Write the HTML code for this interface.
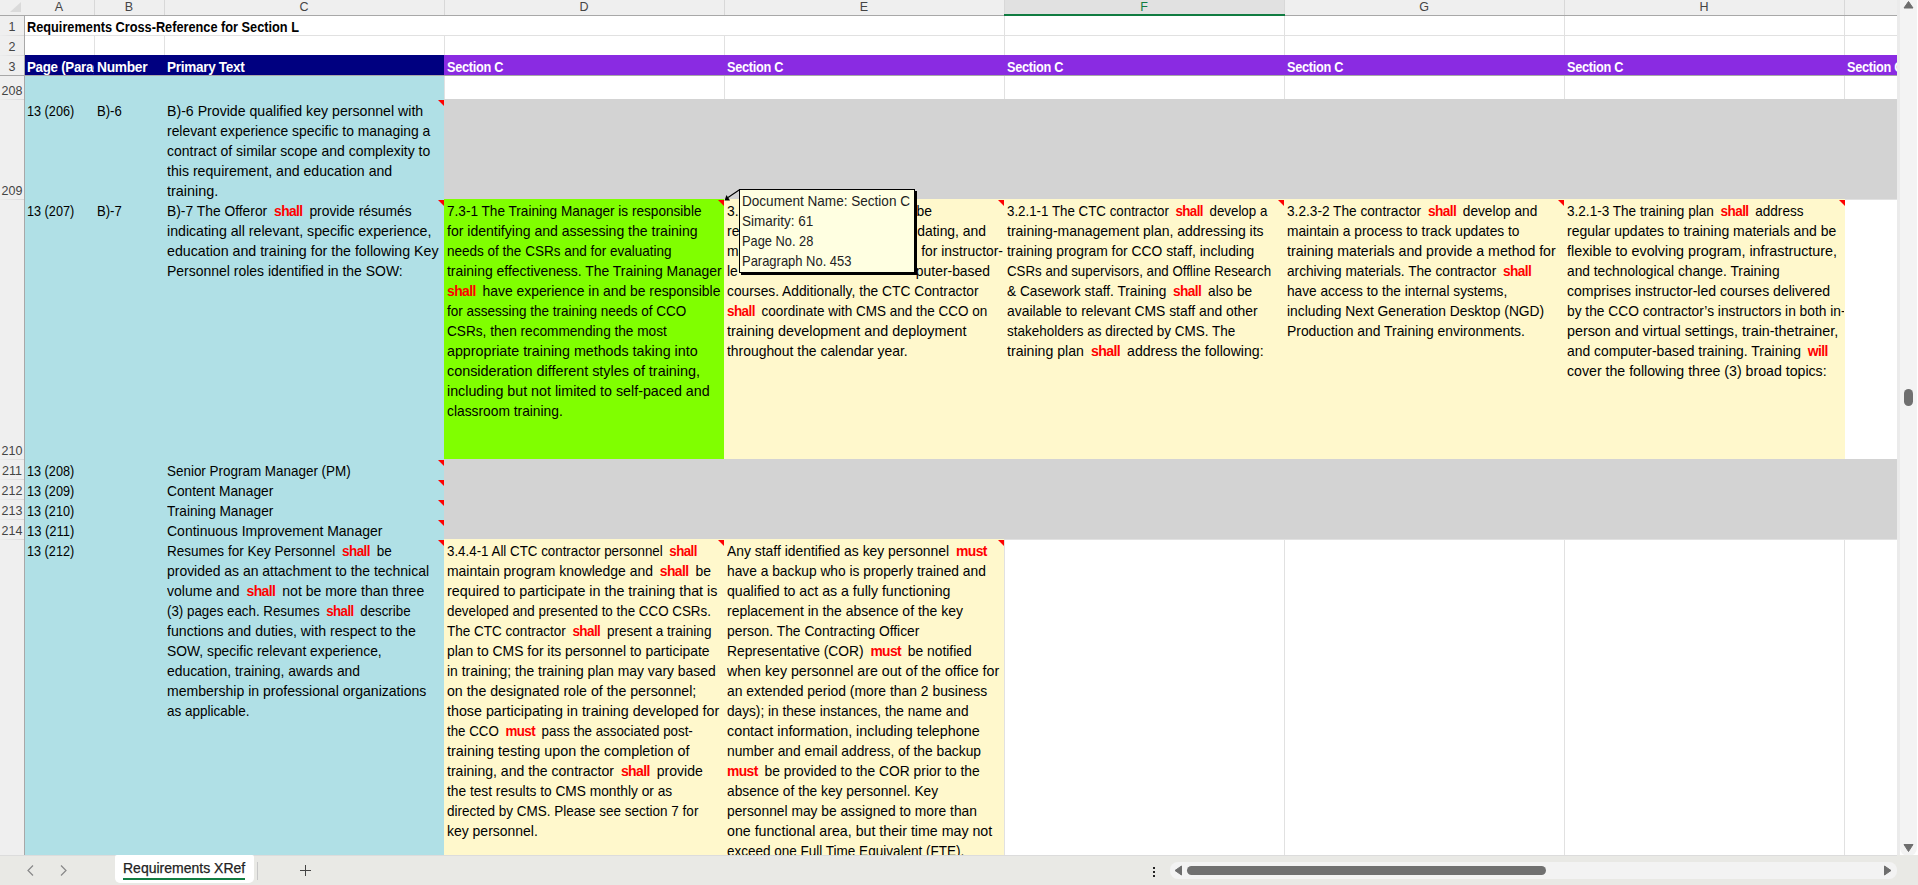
<!DOCTYPE html>
<html><head><meta charset="utf-8"><title>Requirements XRef</title><style>
*{margin:0;padding:0;box-sizing:border-box}
html,body{width:1918px;height:885px;overflow:hidden;background:#fff;font-family:"Liberation Sans",sans-serif}
body>div,#g>div{position:absolute}
#g{position:absolute;left:0;top:0;width:1897px;height:855px;overflow:hidden;background:#fff}
#g>div{position:absolute}
.t{font-size:13.9px;line-height:20px;color:#000;white-space:nowrap}
.r{color:#ff0000;font-weight:bold;padding:0 3px 0 3px}
.r0{padding-left:0}
.tb{font-weight:bold}
.tt{color:#222}
.ln{position:absolute;left:0;white-space:nowrap;transform-origin:0 0}
.r{letter-spacing:-0.6px}
.hb{font-size:13.9px;line-height:20px;color:#fff;font-weight:bold;white-space:nowrap;letter-spacing:-0.3px}
.ch{font-size:12.5px;line-height:15px;color:#444;text-align:center}
.rh{font-size:12.5px;line-height:15px;color:#444;text-align:center;width:24px}
.tri{width:0;height:0;border-top:6px solid #f00;border-left:6px solid transparent}
</style></head><body>
<div id="g">
<div style="left:0px;top:0px;width:1897px;height:15px;background:#efefef;"></div>
<div style="left:0px;top:0px;width:24px;height:855px;background:#efefef;"></div>
<div style="left:1005px;top:0px;width:279px;height:15px;background:#e1e1e1;"></div>
<div style="left:94px;top:15px;width:1px;height:840px;background:#e1e1e1;"></div>
<div style="left:164px;top:15px;width:1px;height:840px;background:#e1e1e1;"></div>
<div style="left:444px;top:15px;width:1px;height:840px;background:#e1e1e1;"></div>
<div style="left:724px;top:15px;width:1px;height:840px;background:#e1e1e1;"></div>
<div style="left:1004px;top:15px;width:1px;height:840px;background:#e1e1e1;"></div>
<div style="left:1284px;top:15px;width:1px;height:840px;background:#e1e1e1;"></div>
<div style="left:1564px;top:15px;width:1px;height:840px;background:#e1e1e1;"></div>
<div style="left:1844px;top:15px;width:1px;height:840px;background:#e1e1e1;"></div>
<div style="left:94px;top:0px;width:1px;height:15px;background:#d8d8d8;"></div>
<div style="left:164px;top:0px;width:1px;height:15px;background:#d8d8d8;"></div>
<div style="left:444px;top:0px;width:1px;height:15px;background:#d8d8d8;"></div>
<div style="left:724px;top:0px;width:1px;height:15px;background:#d8d8d8;"></div>
<div style="left:1004px;top:0px;width:1px;height:15px;background:#d8d8d8;"></div>
<div style="left:1284px;top:0px;width:1px;height:15px;background:#d8d8d8;"></div>
<div style="left:1564px;top:0px;width:1px;height:15px;background:#d8d8d8;"></div>
<div style="left:1844px;top:0px;width:1px;height:15px;background:#d8d8d8;"></div>
<div style="left:25px;top:35px;width:1872px;height:1px;background:#e1e1e1;"></div>
<div style="left:0px;top:35px;width:24px;height:1px;background:linear-gradient(to right,#ececec,#d9d9d9)"></div>
<div style="left:25px;top:55px;width:1872px;height:1px;background:#e1e1e1;"></div>
<div style="left:0px;top:55px;width:24px;height:1px;background:linear-gradient(to right,#ececec,#d9d9d9)"></div>
<div style="left:25px;top:75px;width:1872px;height:1px;background:#e1e1e1;"></div>
<div style="left:0px;top:75px;width:24px;height:1px;background:linear-gradient(to right,#ececec,#d9d9d9)"></div>
<div style="left:25px;top:99px;width:1872px;height:1px;background:#e1e1e1;"></div>
<div style="left:0px;top:99px;width:24px;height:1px;background:linear-gradient(to right,#ececec,#d9d9d9)"></div>
<div style="left:25px;top:199px;width:1872px;height:1px;background:#e1e1e1;"></div>
<div style="left:0px;top:199px;width:24px;height:1px;background:linear-gradient(to right,#ececec,#d9d9d9)"></div>
<div style="left:25px;top:459px;width:1872px;height:1px;background:#e1e1e1;"></div>
<div style="left:0px;top:459px;width:24px;height:1px;background:linear-gradient(to right,#ececec,#d9d9d9)"></div>
<div style="left:25px;top:479px;width:1872px;height:1px;background:#e1e1e1;"></div>
<div style="left:0px;top:479px;width:24px;height:1px;background:linear-gradient(to right,#ececec,#d9d9d9)"></div>
<div style="left:25px;top:499px;width:1872px;height:1px;background:#e1e1e1;"></div>
<div style="left:0px;top:499px;width:24px;height:1px;background:linear-gradient(to right,#ececec,#d9d9d9)"></div>
<div style="left:25px;top:519px;width:1872px;height:1px;background:#e1e1e1;"></div>
<div style="left:0px;top:519px;width:24px;height:1px;background:linear-gradient(to right,#ececec,#d9d9d9)"></div>
<div style="left:25px;top:539px;width:1872px;height:1px;background:#e1e1e1;"></div>
<div style="left:0px;top:539px;width:24px;height:1px;background:linear-gradient(to right,#ececec,#d9d9d9)"></div>
<div style="left:25px;top:855px;width:1872px;height:1px;background:#e1e1e1;"></div>
<div style="left:25px;top:16px;width:979px;height:19px;background:#fff;"></div>
<div style="left:25px;top:55px;width:419px;height:20px;background:#000080;"></div>
<div style="left:444px;top:55px;width:1453px;height:20px;background:#8a2be2;"></div>
<div style="left:25px;top:76px;width:419px;height:779px;background:#b0e0e6;"></div>
<div style="left:444px;top:99px;width:1453px;height:100px;background:#d3d3d3;"></div>
<div style="left:444px;top:199px;width:280px;height:260px;background:#80ff00;"></div>
<div style="left:724px;top:199px;width:1121px;height:260px;background:#fff8cc;"></div>
<div style="left:444px;top:459px;width:1453px;height:80px;background:#d3d3d3;"></div>
<div style="left:444px;top:539px;width:560px;height:316px;background:#fff8cc;"></div>
<div style="left:0px;top:75px;width:1897px;height:1px;background:#a8a8a8;"></div>
<div style="left:0px;top:15px;width:1897px;height:1px;background:#a8a8a8;"></div>
<div style="left:24px;top:15px;width:1px;height:840px;background:#a8a8a8;"></div>
<div style="left:1004px;top:14px;width:281px;height:2px;background:#107c41;"></div>
<div style="left:10px;top:2px;width:0;height:0;border-bottom:10px solid #dadada;border-left:11px solid transparent"></div>
<div class="ch" style="left:24px;top:0px;width:70px;color:#444">A</div>
<div class="ch" style="left:94px;top:0px;width:70px;color:#444">B</div>
<div class="ch" style="left:164px;top:0px;width:280px;color:#444">C</div>
<div class="ch" style="left:444px;top:0px;width:280px;color:#444">D</div>
<div class="ch" style="left:724px;top:0px;width:280px;color:#444">E</div>
<div class="ch" style="left:1004px;top:0px;width:280px;color:#107c41">F</div>
<div class="ch" style="left:1284px;top:0px;width:280px;color:#444">G</div>
<div class="ch" style="left:1564px;top:0px;width:280px;color:#444">H</div>
<div class="rh" style="left:0px;top:20px">1</div>
<div class="rh" style="left:0px;top:40px">2</div>
<div class="rh" style="left:0px;top:60px">3</div>
<div class="rh" style="left:0px;top:84px">208</div>
<div class="rh" style="left:0px;top:184px">209</div>
<div class="rh" style="left:0px;top:444px">210</div>
<div class="rh" style="left:0px;top:464px">211</div>
<div class="rh" style="left:0px;top:484px">212</div>
<div class="rh" style="left:0px;top:504px">213</div>
<div class="rh" style="left:0px;top:524px">214</div>
<div class="t tb blk" style="left:27px;top:16.5px;height:20px"><div class="ln" id="L0" data-tw="272" style="top:0px;transform:scaleX(0.9176)"><span>Requirements Cross-Reference for Section L</span></div></div>
<div class="hb blk" style="left:27px;top:56.5px;width:67px;overflow:hidden;height:20px"><div class="ln" id="L1" data-tw="105.8" style="top:0px;transform:scaleX(0.9599)"><span>Page (Paragraph)</span></div></div>
<div class="hb blk" style="left:97px;top:56.5px;height:20px"><div class="ln" id="L2" data-tw="50.3" style="top:0px;transform:scaleX(0.9924)"><span>Number</span></div></div>
<div class="hb blk" style="left:167px;top:56.5px;height:20px"><div class="ln" id="L3" data-tw="77.5" style="top:0px;transform:scaleX(0.9745)"><span>Primary Text</span></div></div>
<div class="hb blk" style="left:447px;top:56.5px;height:20px"><div class="ln" id="L4" data-tw="56.2" style="top:0px;transform:scaleX(0.9157)"><span>Section C</span></div></div>
<div class="hb blk" style="left:727px;top:56.5px;height:20px"><div class="ln" id="L5" data-tw="56.2" style="top:0px;transform:scaleX(0.9157)"><span>Section C</span></div></div>
<div class="hb blk" style="left:1007px;top:56.5px;height:20px"><div class="ln" id="L6" data-tw="56.2" style="top:0px;transform:scaleX(0.9157)"><span>Section C</span></div></div>
<div class="hb blk" style="left:1287px;top:56.5px;height:20px"><div class="ln" id="L7" data-tw="56.2" style="top:0px;transform:scaleX(0.9157)"><span>Section C</span></div></div>
<div class="hb blk" style="left:1567px;top:56.5px;height:20px"><div class="ln" id="L8" data-tw="56.2" style="top:0px;transform:scaleX(0.9157)"><span>Section C</span></div></div>
<div class="hb blk" style="left:1847px;top:56.5px;height:20px"><div class="ln" id="L9" data-tw="56.2" style="top:0px;transform:scaleX(0.9157)"><span>Section C</span></div></div>
<div class="t blk" style="left:27px;top:100.5px;height:20px"><div class="ln" id="L10" data-tw="47.2" style="top:0px;transform:scaleX(0.9121)"><span>13 (206)</span></div></div>
<div class="t blk" style="left:97px;top:100.5px;height:20px"><div class="ln" id="L11" data-tw="24.8" style="top:0px;transform:scaleX(0.9448)"><span>B)-6</span></div></div>
<div class="t blk" style="left:167px;top:100.5px;height:100px"><div class="ln" id="L12" data-tw="256.2" style="top:0px;transform:scaleX(1.0178)"><span>B)-6 Provide qualified key personnel with</span></div><div class="ln" id="L13" data-tw="263.2" style="top:20px"><span>relevant experience specific to managing a</span></div><div class="ln" id="L14" data-tw="263.2" style="top:40px;transform:scaleX(1.0057)"><span>contract of similar scope and complexity to</span></div><div class="ln" id="L15" data-tw="225.2" style="top:60px;transform:scaleX(1.0161)"><span>this requirement, and education and</span></div><div class="ln" id="L16" data-tw="51.3" style="top:80px;transform:scaleX(1.0380)"><span>training.</span></div></div>
<div class="t blk" style="left:27px;top:200.5px;height:20px"><div class="ln" id="L17" data-tw="47.2" style="top:0px;transform:scaleX(0.9121)"><span>13 (207)</span></div></div>
<div class="t blk" style="left:97px;top:200.5px;height:20px"><div class="ln" id="L18" data-tw="24.8" style="top:0px;transform:scaleX(0.9448)"><span>B)-7</span></div></div>
<div class="t blk" style="left:167px;top:200.5px;height:80px"><div class="ln" id="L19" data-tw="244.7" style="top:0px;transform:scaleX(0.9960)"><span>B)-7 The Offeror <b class="r">shall</b> provide résumés</span></div><div class="ln" id="L20" data-tw="264.4" style="top:20px;transform:scaleX(1.0191)"><span>indicating all relevant, specific experience,</span></div><div class="ln" id="L21" data-tw="271.6" style="top:40px;transform:scaleX(1.0224)"><span>education and training for the following Key</span></div><div class="ln" id="L22" data-tw="235.7" style="top:60px;transform:scaleX(1.0053)"><span>Personnel roles identified in the SOW:</span></div></div>
<div class="t blk" style="left:447px;top:200.5px;width:277px;overflow:hidden;height:220px"><div class="ln" id="L23" data-tw="254.5" style="top:0px;transform:scaleX(0.9790)"><span>7.3-1 The Training Manager is responsible</span></div><div class="ln" id="L24" data-tw="250.6" style="top:20px;transform:scaleX(1.0110)"><span>for identifying and assessing the training</span></div><div class="ln" id="L25" data-tw="224.6" style="top:40px;transform:scaleX(0.9728)"><span>needs of the CSRs and for evaluating</span></div><div class="ln" id="L26" data-tw="274.6" style="top:60px;transform:scaleX(1.0036)"><span>training effectiveness. The Training Manager</span></div><div class="ln" id="L27" data-tw="273.1" style="top:80px"><span><b class="r r0">shall</b> have experience in and be responsible</span></div><div class="ln" id="L28" data-tw="239.3" style="top:100px;transform:scaleX(0.9715)"><span>for assessing the training needs of CCO</span></div><div class="ln" id="L29" data-tw="219.8" style="top:120px;transform:scaleX(0.9817)"><span>CSRs, then recommending the most</span></div><div class="ln" id="L30" data-tw="250.6" style="top:140px;transform:scaleX(1.0270)"><span>appropriate training methods taking into</span></div><div class="ln" id="L31" data-tw="253" style="top:160px;transform:scaleX(1.0347)"><span>consideration different styles of training,</span></div><div class="ln" id="L32" data-tw="262.6" style="top:180px;transform:scaleX(1.0274)"><span>including but not limited to self-paced and</span></div><div class="ln" id="L33" data-tw="115.8" style="top:200px;transform:scaleX(0.9933)"><span>classroom training.</span></div></div>
<div class="t blk" style="left:727px;top:200.5px;width:277px;overflow:hidden;height:160px"><div class="ln" id="L34" style="top:0px"><span>3.2.1-2 The</span></div><div class="ln" id="L35" style="top:20px"><span>responsible</span></div><div class="ln" id="L36" style="top:40px"><span>maintaining</span></div><div class="ln" id="L37" style="top:60px"><span>le</span></div><div class="ln" id="L38" data-tw="251.5" style="top:80px;transform:scaleX(0.9911)"><span>courses. Additionally, the CTC Contractor</span></div><div class="ln" id="L39" data-tw="260.3" style="top:100px;transform:scaleX(0.9716)"><span><b class="r r0">shall</b> coordinate with CMS and the CCO on</span></div><div class="ln" id="L40" data-tw="239.4" style="top:120px;transform:scaleX(1.0334)"><span>training development and deployment</span></div><div class="ln" id="L41" data-tw="180.9" style="top:140px"><span>throughout the calendar year.</span></div></div>
<div class="t" style="left:916px;top:200.5px;width:16px;overflow:hidden;text-align:right;direction:rtl"><span style="direction:ltr;unicode-bidi:bidi-override">be</span></div>
<div class="t" style="left:916px;top:220.5px;width:70px;overflow:hidden;text-align:right;direction:rtl"><span style="direction:ltr;unicode-bidi:bidi-override">dating, and</span></div>
<div class="t" style="left:916px;top:240.5px;width:87px;overflow:hidden;text-align:right;direction:rtl"><span style="direction:ltr;unicode-bidi:bidi-override"> for instructor-</span></div>
<div class="t" style="left:916px;top:260.5px;width:74px;overflow:hidden;text-align:right;direction:rtl"><span style="direction:ltr;unicode-bidi:bidi-override">puter-based</span></div>
<div class="t blk" style="left:1007px;top:200.5px;width:277px;overflow:hidden;height:160px"><div class="ln" id="L42" data-tw="260.3" style="top:0px;transform:scaleX(0.9589)"><span>3.2.1-1 The CTC contractor <b class="r">shall</b> develop a</span></div><div class="ln" id="L43" data-tw="256.6" style="top:20px;transform:scaleX(1.0070)"><span>training-management plan, addressing its</span></div><div class="ln" id="L44" data-tw="247.3" style="top:40px;transform:scaleX(0.9958)"><span>training program for CCO staff, including</span></div><div class="ln" id="L45" data-tw="264.1" style="top:60px;transform:scaleX(0.9563)"><span>CSRs and supervisors, and Offline Research</span></div><div class="ln" id="L46" data-tw="245.1" style="top:80px;transform:scaleX(0.9842)"><span>&amp; Casework staff. Training <b class="r">shall</b> also be</span></div><div class="ln" id="L47" data-tw="250.5" style="top:100px"><span>available to relevant CMS staff and other</span></div><div class="ln" id="L48" data-tw="228.3" style="top:120px;transform:scaleX(0.9705)"><span>stakeholders as directed by CMS. The</span></div><div class="ln" id="L49" data-tw="256.6" style="top:140px;transform:scaleX(1.0166)"><span>training plan <b class="r">shall</b> address the following:</span></div></div>
<div class="t blk" style="left:1287px;top:200.5px;width:277px;overflow:hidden;height:140px"><div class="ln" id="L50" data-tw="250.3" style="top:0px;transform:scaleX(0.9835)"><span>3.2.3-2 The contractor <b class="r">shall</b> develop and</span></div><div class="ln" id="L51" data-tw="232.5" style="top:20px;transform:scaleX(0.9905)"><span>maintain a process to track updates to</span></div><div class="ln" id="L52" data-tw="268.7" style="top:40px;transform:scaleX(1.0175)"><span>training materials and provide a method for</span></div><div class="ln" id="L53" data-tw="247.1" style="top:60px;transform:scaleX(0.9831)"><span>archiving materials. The contractor <b class="r">shall</b></span></div><div class="ln" id="L54" data-tw="220.2" style="top:80px;transform:scaleX(0.9834)"><span>have access to the internal systems,</span></div><div class="ln" id="L55" data-tw="257.2" style="top:100px;transform:scaleX(0.9944)"><span>including Next Generation Desktop (NGD)</span></div><div class="ln" id="L56" data-tw="237.9" style="top:120px"><span>Production and Training environments.</span></div></div>
<div class="t blk" style="left:1567px;top:200.5px;width:277px;overflow:hidden;height:180px"><div class="ln" id="L57" data-tw="236.5" style="top:0px;transform:scaleX(0.9768)"><span>3.2.1-3 The training plan <b class="r">shall</b> address</span></div><div class="ln" id="L58" data-tw="269.3" style="top:20px;transform:scaleX(1.0050)"><span>regular updates to training materials and be</span></div><div class="ln" id="L59" data-tw="270" style="top:40px;transform:scaleX(1.0316)"><span>flexible to evolving program, infrastructure,</span></div><div class="ln" id="L60" data-tw="212.6" style="top:60px;transform:scaleX(0.9903)"><span>and technological change. Training</span></div><div class="ln" id="L61" data-tw="263.1" style="top:80px;transform:scaleX(1.0113)"><span>comprises instructor-led courses delivered</span></div><div class="ln" id="L62" data-tw="278.5" style="top:100px;transform:scaleX(0.9901)"><span>by the CCO contractor’s instructors in both in-</span></div><div class="ln" id="L63" data-tw="271.2" style="top:120px;transform:scaleX(1.0300)"><span>person and virtual settings, train-thetrainer,</span></div><div class="ln" id="L64" data-tw="264" style="top:140px"><span>and computer-based training. Training <b class="r">will</b></span></div><div class="ln" id="L65" data-tw="259.6" style="top:160px;transform:scaleX(1.0189)"><span>cover the following three (3) broad topics:</span></div></div>
<div class="t blk" style="left:27px;top:460.5px;height:20px"><div class="ln" id="L66" data-tw="47.2" style="top:0px;transform:scaleX(0.9121)"><span>13 (208)</span></div></div>
<div class="t blk" style="left:167px;top:460.5px;height:20px"><div class="ln" id="L67" data-tw="183.7" style="top:0px;transform:scaleX(0.9673)"><span>Senior Program Manager (PM)</span></div></div>
<div class="t blk" style="left:27px;top:480.5px;height:20px"><div class="ln" id="L68" data-tw="47.2" style="top:0px;transform:scaleX(0.9121)"><span>13 (209)</span></div></div>
<div class="t blk" style="left:167px;top:480.5px;height:20px"><div class="ln" id="L69" data-tw="106.3" style="top:0px;transform:scaleX(0.9903)"><span>Content Manager</span></div></div>
<div class="t blk" style="left:27px;top:500.5px;height:20px"><div class="ln" id="L70" data-tw="47.2" style="top:0px;transform:scaleX(0.9121)"><span>13 (210)</span></div></div>
<div class="t blk" style="left:167px;top:500.5px;height:20px"><div class="ln" id="L71" data-tw="106.3" style="top:0px;transform:scaleX(0.9810)"><span>Training Manager</span></div></div>
<div class="t blk" style="left:27px;top:520.5px;height:20px"><div class="ln" id="L72" data-tw="47.2" style="top:0px;transform:scaleX(0.9306)"><span>13 (211)</span></div></div>
<div class="t blk" style="left:167px;top:520.5px;height:20px"><div class="ln" id="L73" data-tw="215.4" style="top:0px;transform:scaleX(1.0071)"><span>Continuous Improvement Manager</span></div></div>
<div class="t blk" style="left:27px;top:540.5px;height:20px"><div class="ln" id="L74" data-tw="47.2" style="top:0px;transform:scaleX(0.9121)"><span>13 (212)</span></div></div>
<div class="t blk" style="left:167px;top:540.5px;height:180px"><div class="ln" id="L75" data-tw="224.7" style="top:0px;transform:scaleX(0.9736)"><span>Resumes for Key Personnel <b class="r">shall</b> be</span></div><div class="ln" id="L76" data-tw="262" style="top:20px;transform:scaleX(1.0038)"><span>provided as an attachment to the technical</span></div><div class="ln" id="L77" data-tw="257.2" style="top:40px;transform:scaleX(1.0096)"><span>volume and <b class="r">shall</b> not be more than three</span></div><div class="ln" id="L78" data-tw="243.6" style="top:60px;transform:scaleX(0.9592)"><span>(3) pages each. Resumes <b class="r">shall</b> describe</span></div><div class="ln" id="L79" data-tw="248.8" style="top:80px;transform:scaleX(1.0196)"><span>functions and duties, with respect to the</span></div><div class="ln" id="L80" data-tw="214.7" style="top:100px;transform:scaleX(0.9967)"><span>SOW, specific relevant experience,</span></div><div class="ln" id="L81" data-tw="193" style="top:120px"><span>education, training, awards and</span></div><div class="ln" id="L82" data-tw="259.3" style="top:140px;transform:scaleX(1.0115)"><span>membership in professional organizations</span></div><div class="ln" id="L83" data-tw="82.6" style="top:160px;transform:scaleX(0.9723)"><span>as applicable.</span></div></div>
<div class="t blk" style="left:447px;top:540.5px;width:277px;overflow:hidden;height:300px"><div class="ln" id="L84" data-tw="252.7" style="top:0px;transform:scaleX(0.9602)"><span>3.4.4-1 All CTC contractor personnel <b class="r">shall</b></span></div><div class="ln" id="L85" data-tw="263.9" style="top:20px;transform:scaleX(1.0025)"><span>maintain program knowledge and <b class="r">shall</b> be</span></div><div class="ln" id="L86" data-tw="270.4" style="top:40px;transform:scaleX(1.0299)"><span>required to participate in the training that is</span></div><div class="ln" id="L87" data-tw="263.9" style="top:60px;transform:scaleX(0.9627)"><span>developed and presented to the CCO CSRs.</span></div><div class="ln" id="L88" data-tw="264.4" style="top:80px;transform:scaleX(0.9732)"><span>The CTC contractor <b class="r">shall</b> present a training</span></div><div class="ln" id="L89" data-tw="262.9" style="top:100px"><span>plan to CMS for its personnel to participate</span></div><div class="ln" id="L90" data-tw="268.9" style="top:120px"><span>in training; the training plan may vary based</span></div><div class="ln" id="L91" data-tw="249.3" style="top:140px;transform:scaleX(1.0183)"><span>on the designated role of the personnel;</span></div><div class="ln" id="L92" data-tw="272.2" style="top:160px;transform:scaleX(1.0277)"><span>those participating in training developed for</span></div><div class="ln" id="L93" data-tw="245.8" style="top:180px;transform:scaleX(0.9598)"><span>the CCO <b class="r">must</b> pass the associated post-</span></div><div class="ln" id="L94" data-tw="242.4" style="top:200px;transform:scaleX(1.0325)"><span>training testing upon the completion of</span></div><div class="ln" id="L95" data-tw="255.8" style="top:220px;transform:scaleX(1.0103)"><span>training, and the contractor <b class="r">shall</b> provide</span></div><div class="ln" id="L96" data-tw="225.2" style="top:240px;transform:scaleX(0.9888)"><span>the test results to CMS monthly or as</span></div><div class="ln" id="L97" data-tw="251.4" style="top:260px;transform:scaleX(0.9719)"><span>directed by CMS. Please see section 7 for</span></div><div class="ln" id="L98" data-tw="90.8" style="top:280px;transform:scaleX(1.0051)"><span>key personnel.</span></div></div>
<div class="t blk" style="left:727px;top:540.5px;width:277px;overflow:hidden;height:320px"><div class="ln" id="L99" data-tw="263.3" style="top:0px"><span>Any staff identified as key personnel <b class="r">must</b></span></div><div class="ln" id="L100" data-tw="258.8" style="top:20px;transform:scaleX(0.9916)"><span>have a backup who is properly trained and</span></div><div class="ln" id="L101" data-tw="223.4" style="top:40px;transform:scaleX(1.0186)"><span>qualified to act as a fully functioning</span></div><div class="ln" id="L102" data-tw="235.9" style="top:60px;transform:scaleX(1.0049)"><span>replacement in the absence of the key</span></div><div class="ln" id="L103" data-tw="192.4" style="top:80px;transform:scaleX(0.9954)"><span>person. The Contracting Officer</span></div><div class="ln" id="L104" data-tw="244.6" style="top:100px;transform:scaleX(0.9941)"><span>Representative (COR) <b class="r">must</b> be notified</span></div><div class="ln" id="L105" data-tw="272.2" style="top:120px;transform:scaleX(1.0227)"><span>when key personnel are out of the office for</span></div><div class="ln" id="L106" data-tw="260.1" style="top:140px"><span>an extended period (more than 2 business</span></div><div class="ln" id="L107" data-tw="241.5" style="top:160px;transform:scaleX(0.9835)"><span>days); in these instances, the name and</span></div><div class="ln" id="L108" data-tw="252.7" style="top:180px;transform:scaleX(1.0323)"><span>contact information, including telephone</span></div><div class="ln" id="L109" data-tw="254" style="top:200px;transform:scaleX(0.9938)"><span>number and email address, of the backup</span></div><div class="ln" id="L110" data-tw="252.7" style="top:220px;transform:scaleX(0.9954)"><span><b class="r r0">must</b> be provided to the COR prior to the</span></div><div class="ln" id="L111" data-tw="211.1" style="top:240px;transform:scaleX(0.9904)"><span>absence of the key personnel. Key</span></div><div class="ln" id="L112" data-tw="249.9" style="top:260px;transform:scaleX(0.9927)"><span>personnel may be assigned to more than</span></div><div class="ln" id="L113" data-tw="265.2" style="top:280px;transform:scaleX(1.0221)"><span>one functional area, but their time may not</span></div><div class="ln" id="L114" data-tw="237.2" style="top:300px;transform:scaleX(0.9723)"><span>exceed one Full Time Equivalent (FTE).</span></div></div>
<div class="tri" style="left:438px;top:100px"></div>
<div class="tri" style="left:438px;top:200px"></div>
<div class="tri" style="left:718px;top:200px"></div>
<div class="tri" style="left:998px;top:200px"></div>
<div class="tri" style="left:1278px;top:200px"></div>
<div class="tri" style="left:1558px;top:200px"></div>
<div class="tri" style="left:1839px;top:200px"></div>
<div class="tri" style="left:438px;top:460px"></div>
<div class="tri" style="left:438px;top:480px"></div>
<div class="tri" style="left:438px;top:500px"></div>
<div class="tri" style="left:438px;top:520px"></div>
<div class="tri" style="left:438px;top:540px"></div>
<div class="tri" style="left:718px;top:540px"></div>
<div class="tri" style="left:998px;top:540px"></div>
<div style="left:741px;top:191px;width:176px;height:84px;background:#000"></div>
<div style="left:739px;top:189px;width:176px;height:84px;background:#ffffe1;border:1px solid #000"></div>
<div class="t tt blk" style="left:742px;top:191px;height:80px"><div class="ln" id="L115" data-tw="168" style="top:0px;transform:scaleX(0.9758)"><span>Document Name: Section C</span></div><div class="ln" id="L116" data-tw="71.3" style="top:20px;transform:scaleX(0.9721)"><span>Simarity: 61</span></div><div class="ln" id="L117" data-tw="71.3" style="top:40px;transform:scaleX(0.9232)"><span>Page No. 28</span></div><div class="ln" id="L118" data-tw="109.5" style="top:60px;transform:scaleX(0.9328)"><span>Paragraph No. 453</span></div></div>
<svg style="position:absolute;left:720px;top:185px" width="25" height="20" viewBox="0 0 25 20"><line x1="19.5" y1="4.8" x2="8" y2="12.5" stroke="#000" stroke-width="1.1"/><polygon points="6.5,10 4.5,15.5 10,15.5" fill="#000"/></svg>
</div>
<div style="left:1897px;top:0px;width:3px;height:856px;background:#ebebeb;"></div>
<div style="left:1900px;top:0px;width:17px;height:856px;background:#f3f3f3;border-radius:0 0 8px 8px"></div>
<svg style="position:absolute;left:1903px;top:0px" width="12" height="10"><polygon points="1,8 10,8 5.5,1.5" fill="#6e6e6e" stroke="#6e6e6e" stroke-width="1" stroke-linejoin="round"/></svg>
<svg style="position:absolute;left:1903px;top:843px" width="12" height="10"><polygon points="1,1.5 10,1.5 5.5,8.5" fill="#6e6e6e" stroke="#6e6e6e" stroke-width="1" stroke-linejoin="round"/></svg>
<div style="left:1904px;top:389px;width:9px;height:17px;background:#707070;border-radius:5px"></div>
<div style="left:0px;top:855px;width:1918px;height:30px;background:#e9e9e5;"></div>
<div style="left:1897px;top:856px;width:21px;height:29px;background:#e9e9e5;"></div>
<div style="left:0px;top:855px;width:1897px;height:1px;background:#dcdcdc;"></div>
<svg style="position:absolute;left:26px;top:864px" width="10" height="14"><polyline points="7,1.5 2,6.5 7,11.5" fill="none" stroke="#888" stroke-width="1.2"/></svg>
<svg style="position:absolute;left:59px;top:864px" width="10" height="14"><polyline points="2,1.5 7,6.5 2,11.5" fill="none" stroke="#888" stroke-width="1.2"/></svg>
<div style="left:115px;top:855px;width:139px;height:28px;background:#fff;border-radius:2px 2px 5px 5px"></div>
<div style="left:123px;top:858px;font-size:14px;line-height:20px;color:#222;white-space:nowrap;-webkit-text-stroke:0.25px #222">Requirements XRef</div>
<div style="left:123px;top:878px;width:122px;height:2px;background:#107c41;"></div>
<div style="left:257px;top:862px;width:1px;height:18px;background:#c8c8c8;"></div>
<div style="left:300px;top:870px;width:11px;height:1px;background:#444;"></div>
<div style="left:305px;top:865px;width:1px;height:11px;background:#444;"></div>
<div style="left:1153px;top:867px;width:2px;height:2px;background:#222;"></div>
<div style="left:1153px;top:871px;width:2px;height:2px;background:#222;"></div>
<div style="left:1153px;top:875px;width:2px;height:2px;background:#222;"></div>
<div style="left:1170px;top:862px;width:727px;height:17px;background:#f3f3f3;border-radius:8px"></div>
<svg style="position:absolute;left:1172px;top:864px" width="12" height="14"><polygon points="9.5,2 9.5,11 3,6.5" fill="#6e6e6e" stroke="#6e6e6e" stroke-width="1" stroke-linejoin="round"/></svg>
<svg style="position:absolute;left:1882px;top:864px" width="12" height="14"><polygon points="2.5,2 2.5,11 9,6.5" fill="#6e6e6e" stroke="#6e6e6e" stroke-width="1" stroke-linejoin="round"/></svg>
<div style="left:1187px;top:866px;width:359px;height:9px;background:#707070;border-radius:5px"></div>
</body></html>
